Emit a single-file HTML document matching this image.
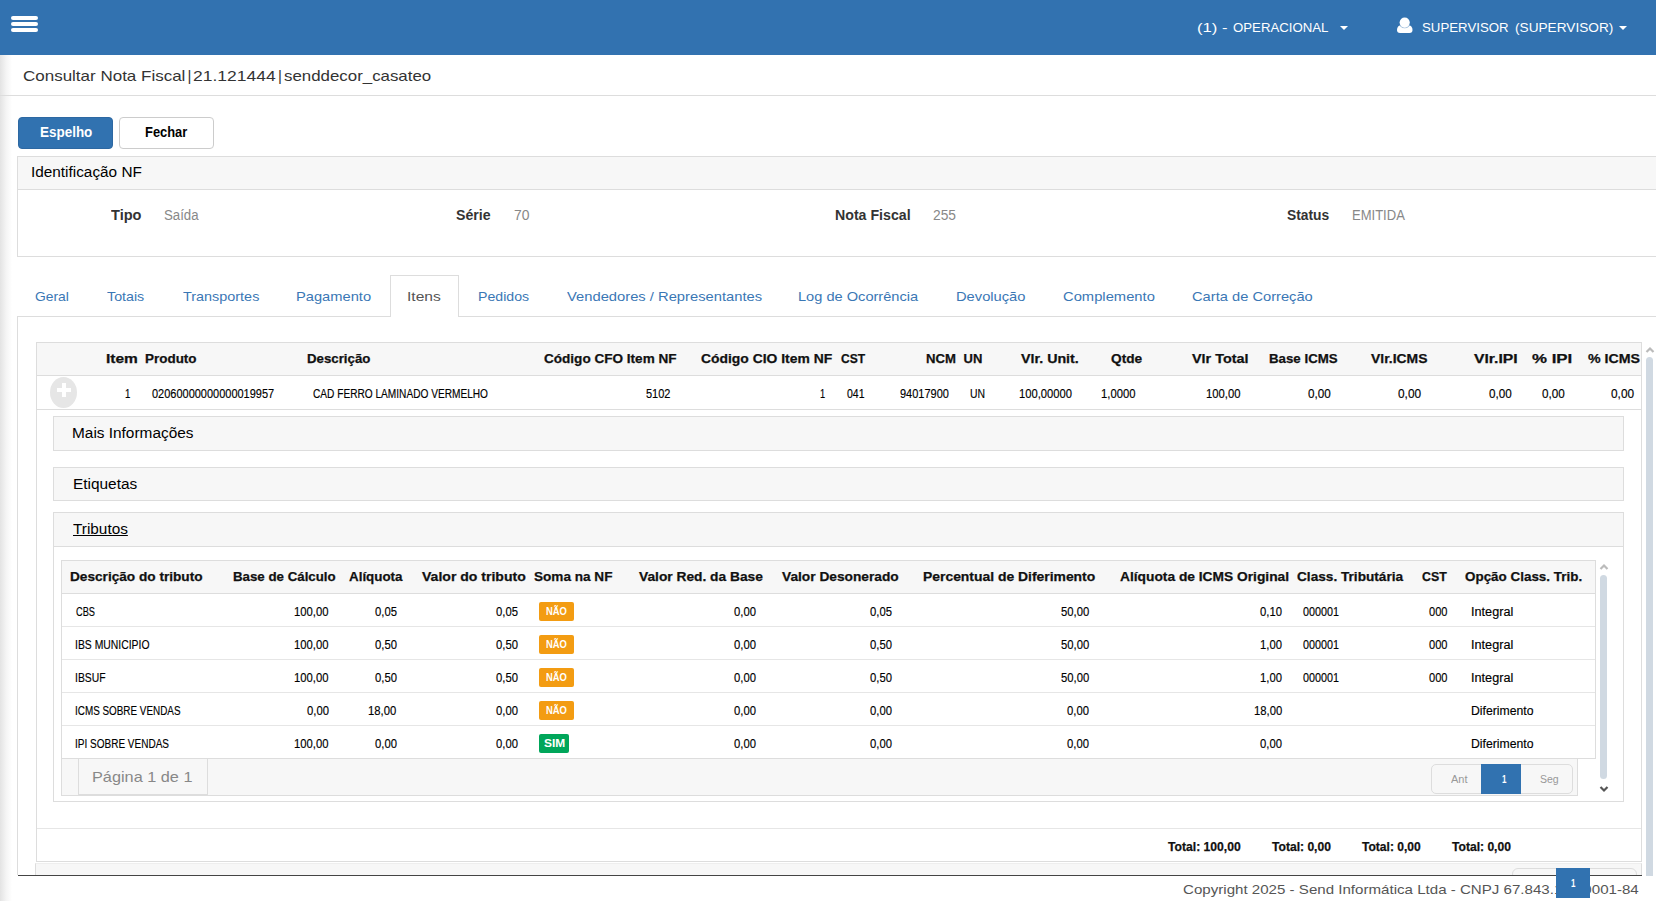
<!DOCTYPE html>
<html><head><meta charset="utf-8"><style>
html,body{margin:0;padding:0;background:#fff;width:1656px;height:901px;overflow:hidden;position:relative}
.b{position:absolute}
.hv{-webkit-text-stroke:0.25px currentColor}
.hd{-webkit-text-stroke:0.15px currentColor}
.t{position:absolute;white-space:nowrap;line-height:1;font-family:"Liberation Sans",sans-serif;transform-origin:0 0}
</style></head><body>
<div class="b" style="left:0px;top:55px;width:12px;height:846px;background:linear-gradient(to right,#e3e3e3,#f4f4f4 50%,#fff);"></div>
<div class="b" style="left:0px;top:0px;width:1656px;height:55px;background:#3272b0;"></div>
<div class="b" style="left:11px;top:16px;width:27px;height:4px;background:#fff;border-radius:2px;"></div>
<div class="b" style="left:11px;top:22px;width:27px;height:4px;background:#fff;border-radius:2px;"></div>
<div class="b" style="left:11px;top:28px;width:27px;height:4px;background:#fff;border-radius:2px;"></div>
<div class="b" style="left:1340px;top:26px;width:0;height:0;border-left:4px solid transparent;border-right:4px solid transparent;border-top:4px solid #fff;"></div>
<div class="b" style="left:1619px;top:26px;width:0;height:0;border-left:4px solid transparent;border-right:4px solid transparent;border-top:4px solid #fff;"></div>
<svg class="b" style="left:1396px;top:16px" width="18" height="18" viewBox="0 0 18 18"><path d="M1 14 Q1 9.5 5.5 9 L12 9 Q16.5 9.5 16.5 14 Q16.5 17 13.5 17 L4 17 Q1 17 1 14 Z" fill="#fff"/><circle cx="8.7" cy="6.6" r="5.7" fill="#3272b0" opacity="0.5"/><circle cx="8.7" cy="6.6" r="5.1" fill="#fff"/></svg>
<div class="b" style="left:0px;top:95px;width:1656px;height:1px;background:#ddd;"></div>
<div class="b" style="left:18px;top:117px;width:95px;height:32px;background:#3172b0;border:1px solid #2d68a2;border-radius:4px;box-sizing:border-box;"></div>
<div class="b" style="left:119px;top:117px;width:95px;height:32px;background:#fff;border:1px solid #ccc;border-radius:4px;box-sizing:border-box;"></div>
<div class="b" style="left:17px;top:156px;width:1683px;height:101px;border:1px solid #ddd;box-sizing:border-box;background:#fff;"></div>
<div class="b" style="left:18px;top:157px;width:1682px;height:33px;background:#f7f7f7;border-bottom:1px solid #ddd;box-sizing:border-box;"></div>
<div class="b" style="left:17px;top:316px;width:1639px;height:1px;background:#ddd;"></div>
<div class="b" style="left:17px;top:316px;width:1px;height:559px;background:#ddd;"></div>
<div class="b" style="left:390px;top:275px;width:69px;height:42px;background:#fff;border:1px solid #ddd;border-bottom:none;box-sizing:border-box;"></div>
<div class="b" style="left:36px;top:342px;width:1606px;height:520px;border:1px solid #ddd;box-sizing:border-box;"></div>
<div class="b" style="left:37px;top:343px;width:1604px;height:33px;background:#f7f7f7;border-bottom:1px solid #ddd;box-sizing:border-box;"></div>
<div class="b" style="left:37px;top:409px;width:1604px;height:1px;background:#ddd;"></div>
<div class="b" style="left:37px;top:828px;width:1604px;height:1px;background:#e6e6e6;"></div>
<div class="b" style="left:50px;top:377px;width:27px;height:31px;background:#e6e6e6;border-radius:50%;"></div>
<div class="b" style="left:62px;top:383px;width:4px;height:14px;background:#fff;"></div>
<div class="b" style="left:57px;top:388px;width:14px;height:4px;background:#fff;"></div>
<div class="b" style="left:53px;top:416px;width:1571px;height:35px;background:#f7f7f7;border:1px solid #ddd;box-sizing:border-box;"></div>
<div class="b" style="left:53px;top:467px;width:1571px;height:34px;background:#f7f7f7;border:1px solid #ddd;box-sizing:border-box;"></div>
<div class="b" style="left:53px;top:512px;width:1571px;height:290px;background:#fff;border:1px solid #ddd;box-sizing:border-box;"></div>
<div class="b" style="left:54px;top:513px;width:1569px;height:34px;background:#f7f7f7;border-bottom:1px solid #ddd;box-sizing:border-box;"></div>
<div class="b" style="left:61px;top:560px;width:1535px;height:199px;background:#fff;border:1px solid #ddd;box-sizing:border-box;"></div>
<div class="b" style="left:62px;top:561px;width:1533px;height:33px;background:#f7f7f7;border-bottom:1px solid #ddd;box-sizing:border-box;"></div>
<div class="b" style="left:62px;top:626px;width:1533px;height:1px;background:#e6e6e6;"></div>
<div class="b" style="left:62px;top:659px;width:1533px;height:1px;background:#e6e6e6;"></div>
<div class="b" style="left:62px;top:692px;width:1533px;height:1px;background:#e6e6e6;"></div>
<div class="b" style="left:62px;top:725px;width:1533px;height:1px;background:#e6e6e6;"></div>
<div class="b" style="left:61px;top:758px;width:1517px;height:38px;background:#f7f7f7;border:1px solid #ddd;box-sizing:border-box;"></div>
<div class="b" style="left:78px;top:758px;width:130px;height:37px;border:1px solid #ddd;border-top:none;box-sizing:border-box;"></div>
<div class="b" style="left:1431px;top:764px;width:142px;height:30px;border:1px solid #ddd;border-radius:5px;box-sizing:border-box;"></div>
<div class="b" style="left:1481px;top:764px;width:40px;height:30px;background:#3172b0;"></div>
<div class="b" style="left:539px;top:602px;width:35px;height:19px;background:#f39c12;border-radius:2px;"></div>
<div class="b" style="left:539px;top:635px;width:35px;height:19px;background:#f39c12;border-radius:2px;"></div>
<div class="b" style="left:539px;top:668px;width:35px;height:19px;background:#f39c12;border-radius:2px;"></div>
<div class="b" style="left:539px;top:701px;width:35px;height:19px;background:#f39c12;border-radius:2px;"></div>
<div class="b" style="left:539px;top:734px;width:30px;height:19px;background:#00a65a;border-radius:2px;"></div>
<svg class="b" style="left:1598.5px;top:563px" width="10" height="7" viewBox="0 0 10 7"><path d="M1.5 6 L5 2.5 L8.5 6" stroke="#bbb" stroke-width="2.2" fill="none"/></svg>
<div class="b" style="left:1600px;top:575px;width:7px;height:204px;background:#d0d9e2;border-radius:4px;"></div>
<svg class="b" style="left:1598.5px;top:785.5px" width="10" height="7" viewBox="0 0 10 7"><path d="M1.5 1 L5 4.5 L8.5 1" stroke="#555" stroke-width="2.2" fill="none"/></svg>
<div class="b" style="left:35px;top:863px;width:1607px;height:13px;background:#f7f7f7;border-left:1px solid #ddd;border-right:1px solid #ddd;border-top:1px solid #eee;box-sizing:border-box;"></div>
<div class="b" style="left:1512px;top:868px;width:125px;height:12px;border:1px solid #ddd;border-radius:6px;box-sizing:border-box;background:#f7f7f7;"></div>
<svg class="b" style="left:1644.5px;top:345.5px" width="10" height="7" viewBox="0 0 10 7"><path d="M1.5 6 L5 2.5 L8.5 6" stroke="#bbb" stroke-width="2.2" fill="none"/></svg>
<div class="b" style="left:1646px;top:357px;width:7px;height:523px;background:#d0d9e2;border-radius:4px;"></div>
<div class="b" style="left:12px;top:876px;width:1644px;height:25px;background:#fff;"></div>
<div class="b" style="left:18px;top:875px;width:1624px;height:1px;background:#444;"></div>
<div class="t " style="left:1197.00px;top:21.00px;font-size:13.5px;font-weight:400;color:#fff;transform:scaleX(1.2371);">(1) -</div>
<div class="t " style="left:1232.90px;top:21.00px;font-size:13.5px;font-weight:400;color:#fff;transform:scaleX(0.9784);">OPERACIONAL</div>
<div class="t " style="left:1421.70px;top:21.00px;font-size:13.5px;font-weight:400;color:#fff;transform:scaleX(0.9816);">SUPERVISOR</div>
<div class="t " style="left:1514.60px;top:21.00px;font-size:13.5px;font-weight:400;color:#fff;transform:scaleX(1.0106);">(SUPERVISOR)</div>
<div class="t " style="left:22.80px;top:68.00px;font-size:15px;font-weight:400;color:#333;transform:scaleX(1.1324);">Consultar Nota Fiscal</div>
<div class="t " style="left:187.50px;top:68.00px;font-size:15px;font-weight:400;color:#333;">|</div>
<div class="t " style="left:193.20px;top:68.00px;font-size:15px;font-weight:400;color:#333;transform:scaleX(1.1649);">21.121444</div>
<div class="t " style="left:278.00px;top:68.00px;font-size:15px;font-weight:400;color:#333;">|</div>
<div class="t " style="left:284.40px;top:68.00px;font-size:15px;font-weight:400;color:#333;transform:scaleX(1.1242);">senddecor_casateo</div>
<div class="t " style="left:39.50px;top:125.00px;font-size:14px;font-weight:700;color:#fff;transform:scaleX(0.9610);">Espelho</div>
<div class="t " style="left:145.20px;top:125.00px;font-size:14px;font-weight:700;color:#000;transform:scaleX(0.9212);">Fechar</div>
<div class="t " style="left:30.61px;top:164.00px;font-size:15.5px;font-weight:400;color:#000;transform:scaleX(0.9898);">Identificação NF</div>
<div class="t " style="left:111.40px;top:208.00px;font-size:14px;font-weight:700;color:#333;transform:scaleX(1.0404);">Tipo</div>
<div class="t " style="left:164.40px;top:208.00px;font-size:14px;font-weight:400;color:#888;transform:scaleX(0.9457);">Saída</div>
<div class="t " style="left:456.00px;top:208.00px;font-size:14px;font-weight:700;color:#333;transform:scaleX(1.0098);">Série</div>
<div class="t " style="left:513.60px;top:208.00px;font-size:14px;font-weight:400;color:#888;transform:scaleX(0.9945);">70</div>
<div class="t " style="left:835.20px;top:208.00px;font-size:14px;font-weight:700;color:#333;transform:scaleX(1.0122);">Nota Fiscal</div>
<div class="t " style="left:933.40px;top:208.00px;font-size:14px;font-weight:400;color:#888;transform:scaleX(0.9842);">255</div>
<div class="t " style="left:1287.40px;top:208.00px;font-size:14px;font-weight:700;color:#333;transform:scaleX(0.9860);">Status</div>
<div class="t " style="left:1351.67px;top:208.00px;font-size:14px;font-weight:400;color:#888;transform:scaleX(0.9302);">EMITIDA</div>
<div class="t " style="left:35.00px;top:290.00px;font-size:13.5px;font-weight:400;color:#3a77b5;transform:scaleX(1.0269);">Geral</div>
<div class="t " style="left:107.00px;top:290.00px;font-size:13.5px;font-weight:400;color:#3a77b5;transform:scaleX(1.0559);">Totais</div>
<div class="t " style="left:182.50px;top:290.00px;font-size:13.5px;font-weight:400;color:#3a77b5;transform:scaleX(1.0672);">Transportes</div>
<div class="t " style="left:295.51px;top:290.00px;font-size:13.5px;font-weight:400;color:#3a77b5;transform:scaleX(1.0867);">Pagamento</div>
<div class="t " style="left:477.95px;top:290.00px;font-size:13.5px;font-weight:400;color:#3a77b5;transform:scaleX(1.0471);">Pedidos</div>
<div class="t " style="left:566.80px;top:290.00px;font-size:13.5px;font-weight:400;color:#3a77b5;transform:scaleX(1.0924);">Vendedores / Representantes</div>
<div class="t " style="left:798.22px;top:290.00px;font-size:13.5px;font-weight:400;color:#3a77b5;transform:scaleX(1.0818);">Log de Ocorrência</div>
<div class="t " style="left:955.91px;top:290.00px;font-size:13.5px;font-weight:400;color:#3a77b5;transform:scaleX(1.0886);">Devolução</div>
<div class="t " style="left:1063.00px;top:290.00px;font-size:13.5px;font-weight:400;color:#3a77b5;transform:scaleX(1.0930);">Complemento</div>
<div class="t " style="left:1191.90px;top:290.00px;font-size:13.5px;font-weight:400;color:#3a77b5;transform:scaleX(1.0874);">Carta de Correção</div>
<div class="t " style="left:407.04px;top:290.00px;font-size:13.5px;font-weight:400;color:#555;transform:scaleX(1.1572);">Itens</div>
<div class="t hv" style="left:105.50px;top:352.00px;font-size:13px;font-weight:700;color:#111;transform:scaleX(1.1922);">Item</div>
<div class="t hv" style="left:145.20px;top:352.00px;font-size:13px;font-weight:700;color:#111;transform:scaleX(1.0344);">Produto</div>
<div class="t hv" style="left:306.60px;top:352.00px;font-size:13px;font-weight:700;color:#111;transform:scaleX(1.0191);">Descrição</div>
<div class="t hv" style="left:544.10px;top:352.00px;font-size:13px;font-weight:700;color:#111;transform:scaleX(1.0428);">Código CFO Item NF</div>
<div class="t hv" style="left:701.20px;top:352.00px;font-size:13px;font-weight:700;color:#111;transform:scaleX(1.0682);">Código CIO Item NF</div>
<div class="t hv" style="left:840.60px;top:352.00px;font-size:13px;font-weight:700;color:#111;transform:scaleX(0.9287);">CST</div>
<div class="t hv" style="left:926.20px;top:352.00px;font-size:13px;font-weight:700;color:#111;transform:scaleX(1.0112);">NCM</div>
<div class="t hv" style="left:963.60px;top:352.00px;font-size:13px;font-weight:700;color:#111;">UN</div>
<div class="t hv" style="left:1021.20px;top:352.00px;font-size:13px;font-weight:700;color:#111;transform:scaleX(1.0956);">Vlr. Unit.</div>
<div class="t hv" style="left:1110.90px;top:352.00px;font-size:13px;font-weight:700;color:#111;transform:scaleX(1.0517);">Qtde</div>
<div class="t hv" style="left:1191.80px;top:352.00px;font-size:13px;font-weight:700;color:#111;transform:scaleX(1.1065);">Vlr Total</div>
<div class="t hv" style="left:1268.50px;top:352.00px;font-size:13px;font-weight:700;color:#111;transform:scaleX(1.0219);">Base ICMS</div>
<div class="t hv" style="left:1370.70px;top:352.00px;font-size:13px;font-weight:700;color:#111;transform:scaleX(1.0704);">Vlr.ICMS</div>
<div class="t hv" style="left:1474.20px;top:352.00px;font-size:13px;font-weight:700;color:#111;transform:scaleX(1.2078);">Vlr.IPI</div>
<div class="t hv" style="left:1532.00px;top:352.00px;font-size:13px;font-weight:700;color:#111;transform:scaleX(1.2971);">% IPI</div>
<div class="t hv" style="left:1587.80px;top:352.00px;font-size:13px;font-weight:700;color:#111;transform:scaleX(1.0917);">% ICMS</div>
<div class="t  hd" style="left:124.80px;top:388.00px;font-size:12.5px;font-weight:400;color:#000;transform:scaleX(0.7714);">1</div>
<div class="t  hd" style="left:152.00px;top:388.00px;font-size:12.5px;font-weight:400;color:#000;transform:scaleX(0.8786);">02060000000000019957</div>
<div class="t  hd" style="left:312.80px;top:388.00px;font-size:12.5px;font-weight:400;color:#000;transform:scaleX(0.8101);">CAD FERRO LAMINADO VERMELHO</div>
<div class="t  hd" style="left:645.50px;top:388.00px;font-size:12.5px;font-weight:400;color:#000;transform:scaleX(0.8795);">5102</div>
<div class="t  hd" style="left:820.20px;top:388.00px;font-size:12.5px;font-weight:400;color:#000;transform:scaleX(0.7429);">1</div>
<div class="t  hd" style="left:846.60px;top:388.00px;font-size:12.5px;font-weight:400;color:#000;transform:scaleX(0.8420);">041</div>
<div class="t  hd" style="left:899.60px;top:388.00px;font-size:12.5px;font-weight:400;color:#000;transform:scaleX(0.8785);">94017900</div>
<div class="t  hd" style="left:969.80px;top:388.00px;font-size:12.5px;font-weight:400;color:#000;transform:scaleX(0.8321);">UN</div>
<div class="t  hd" style="left:1019.30px;top:388.00px;font-size:12.5px;font-weight:400;color:#000;transform:scaleX(0.8962);">100,00000</div>
<div class="t  hd" style="left:1100.80px;top:388.00px;font-size:12.5px;font-weight:400;color:#000;transform:scaleX(0.9012);">1,0000</div>
<div class="t  hd" style="left:1206.30px;top:388.00px;font-size:12.5px;font-weight:400;color:#000;transform:scaleX(0.9012);">100,00</div>
<div class="t  hd" style="left:1308.20px;top:388.00px;font-size:12.5px;font-weight:400;color:#000;transform:scaleX(0.9353);">0,00</div>
<div class="t  hd" style="left:1398.10px;top:388.00px;font-size:12.5px;font-weight:400;color:#000;transform:scaleX(0.9476);">0,00</div>
<div class="t  hd" style="left:1488.60px;top:388.00px;font-size:12.5px;font-weight:400;color:#000;transform:scaleX(0.9353);">0,00</div>
<div class="t  hd" style="left:1542.40px;top:388.00px;font-size:12.5px;font-weight:400;color:#000;transform:scaleX(0.9353);">0,00</div>
<div class="t  hd" style="left:1610.90px;top:388.00px;font-size:12.5px;font-weight:400;color:#000;transform:scaleX(0.9476);">0,00</div>
<div class="t " style="left:72.31px;top:425.00px;font-size:15.5px;font-weight:400;color:#000;transform:scaleX(0.9928);">Mais Informações</div>
<div class="t " style="left:72.51px;top:476.00px;font-size:15.5px;font-weight:400;color:#000;transform:scaleX(0.9941);">Etiquetas</div>
<div class="t " style="left:72.80px;top:521.00px;font-size:15.5px;font-weight:400;color:#000;transform:scaleX(0.9898);text-decoration:underline;">Tributos</div>
<div class="t hv" style="left:69.50px;top:570.00px;font-size:13px;font-weight:700;color:#111;transform:scaleX(1.0485);">Descrição do tributo</div>
<div class="t hv" style="left:233.10px;top:570.00px;font-size:13px;font-weight:700;color:#111;transform:scaleX(1.0220);">Base de Cálculo</div>
<div class="t hv" style="left:348.90px;top:570.00px;font-size:13px;font-weight:700;color:#111;transform:scaleX(1.0291);">Alíquota</div>
<div class="t hv" style="left:421.70px;top:570.00px;font-size:13px;font-weight:700;color:#111;transform:scaleX(1.0800);">Valor do tributo</div>
<div class="t hv" style="left:533.90px;top:570.00px;font-size:13px;font-weight:700;color:#111;transform:scaleX(1.0441);">Soma na NF</div>
<div class="t hv" style="left:639.10px;top:570.00px;font-size:13px;font-weight:700;color:#111;transform:scaleX(1.0580);">Valor Red. da Base</div>
<div class="t hv" style="left:781.70px;top:570.00px;font-size:13px;font-weight:700;color:#111;transform:scaleX(1.0561);">Valor Desonerado</div>
<div class="t hv" style="left:923.00px;top:570.00px;font-size:13px;font-weight:700;color:#111;transform:scaleX(1.0691);">Percentual de Diferimento</div>
<div class="t hv" style="left:1119.70px;top:570.00px;font-size:13px;font-weight:700;color:#111;transform:scaleX(1.0591);">Alíquota de ICMS Original</div>
<div class="t hv" style="left:1296.60px;top:570.00px;font-size:13px;font-weight:700;color:#111;transform:scaleX(1.0489);">Class. Tributária</div>
<div class="t hv" style="left:1421.90px;top:570.00px;font-size:13px;font-weight:700;color:#111;transform:scaleX(0.9517);">CST</div>
<div class="t hv" style="left:1465.40px;top:570.00px;font-size:13px;font-weight:700;color:#111;transform:scaleX(1.0327);">Opção Class. Trib.</div>
<div class="t  hd" style="left:75.80px;top:606.00px;font-size:12px;font-weight:400;color:#000;transform:scaleX(0.7702);">CBS</div>
<div class="t  hd" style="left:294.20px;top:606.00px;font-size:12px;font-weight:400;color:#000;transform:scaleX(0.9398);">100,00</div>
<div class="t  hd" style="left:374.74px;top:606.00px;font-size:12px;font-weight:400;color:#000;transform:scaleX(0.9398);">0,05</div>
<div class="t  hd" style="left:496.44px;top:606.00px;font-size:12px;font-weight:400;color:#000;transform:scaleX(0.9398);">0,05</div>
<div class="t  hd" style="left:733.74px;top:606.00px;font-size:12px;font-weight:400;color:#000;transform:scaleX(0.9398);">0,00</div>
<div class="t  hd" style="left:870.04px;top:606.00px;font-size:12px;font-weight:400;color:#000;transform:scaleX(0.9398);">0,05</div>
<div class="t  hd" style="left:1060.77px;top:606.00px;font-size:12px;font-weight:400;color:#000;transform:scaleX(0.9398);">50,00</div>
<div class="t  hd" style="left:1259.84px;top:606.00px;font-size:12px;font-weight:400;color:#000;transform:scaleX(0.9398);">0,10</div>
<div class="t  hd" style="left:1303.20px;top:606.00px;font-size:12px;font-weight:400;color:#000;transform:scaleX(0.8992);">000001</div>
<div class="t  hd" style="left:1428.50px;top:606.00px;font-size:12px;font-weight:400;color:#000;transform:scaleX(0.9239);">000</div>
<div class="t  hd" style="left:1470.64px;top:606.00px;font-size:12px;font-weight:400;color:#000;transform:scaleX(1.0558);">Integral</div>
<div class="t " style="left:545.90px;top:606.00px;font-size:11px;font-weight:700;color:#fff;transform:scaleX(0.8558);z-index:3;">NÃO</div>
<div class="t  hd" style="left:74.93px;top:639.00px;font-size:12px;font-weight:400;color:#000;transform:scaleX(0.8657);">IBS MUNICIPIO</div>
<div class="t  hd" style="left:294.20px;top:639.00px;font-size:12px;font-weight:400;color:#000;transform:scaleX(0.9398);">100,00</div>
<div class="t  hd" style="left:374.74px;top:639.00px;font-size:12px;font-weight:400;color:#000;transform:scaleX(0.9398);">0,50</div>
<div class="t  hd" style="left:496.44px;top:639.00px;font-size:12px;font-weight:400;color:#000;transform:scaleX(0.9398);">0,50</div>
<div class="t  hd" style="left:733.74px;top:639.00px;font-size:12px;font-weight:400;color:#000;transform:scaleX(0.9398);">0,00</div>
<div class="t  hd" style="left:870.04px;top:639.00px;font-size:12px;font-weight:400;color:#000;transform:scaleX(0.9398);">0,50</div>
<div class="t  hd" style="left:1060.77px;top:639.00px;font-size:12px;font-weight:400;color:#000;transform:scaleX(0.9398);">50,00</div>
<div class="t  hd" style="left:1259.84px;top:639.00px;font-size:12px;font-weight:400;color:#000;transform:scaleX(0.9398);">1,00</div>
<div class="t  hd" style="left:1303.20px;top:639.00px;font-size:12px;font-weight:400;color:#000;transform:scaleX(0.8992);">000001</div>
<div class="t  hd" style="left:1428.50px;top:639.00px;font-size:12px;font-weight:400;color:#000;transform:scaleX(0.9239);">000</div>
<div class="t  hd" style="left:1470.64px;top:639.00px;font-size:12px;font-weight:400;color:#000;transform:scaleX(1.0558);">Integral</div>
<div class="t " style="left:545.90px;top:639.00px;font-size:11px;font-weight:700;color:#fff;transform:scaleX(0.8558);z-index:3;">NÃO</div>
<div class="t  hd" style="left:74.94px;top:672.00px;font-size:12px;font-weight:400;color:#000;transform:scaleX(0.8645);">IBSUF</div>
<div class="t  hd" style="left:294.20px;top:672.00px;font-size:12px;font-weight:400;color:#000;transform:scaleX(0.9398);">100,00</div>
<div class="t  hd" style="left:374.74px;top:672.00px;font-size:12px;font-weight:400;color:#000;transform:scaleX(0.9398);">0,50</div>
<div class="t  hd" style="left:496.44px;top:672.00px;font-size:12px;font-weight:400;color:#000;transform:scaleX(0.9398);">0,50</div>
<div class="t  hd" style="left:733.74px;top:672.00px;font-size:12px;font-weight:400;color:#000;transform:scaleX(0.9398);">0,00</div>
<div class="t  hd" style="left:870.04px;top:672.00px;font-size:12px;font-weight:400;color:#000;transform:scaleX(0.9398);">0,50</div>
<div class="t  hd" style="left:1060.77px;top:672.00px;font-size:12px;font-weight:400;color:#000;transform:scaleX(0.9398);">50,00</div>
<div class="t  hd" style="left:1259.84px;top:672.00px;font-size:12px;font-weight:400;color:#000;transform:scaleX(0.9398);">1,00</div>
<div class="t  hd" style="left:1303.20px;top:672.00px;font-size:12px;font-weight:400;color:#000;transform:scaleX(0.8992);">000001</div>
<div class="t  hd" style="left:1428.50px;top:672.00px;font-size:12px;font-weight:400;color:#000;transform:scaleX(0.9239);">000</div>
<div class="t  hd" style="left:1470.64px;top:672.00px;font-size:12px;font-weight:400;color:#000;transform:scaleX(1.0558);">Integral</div>
<div class="t " style="left:545.90px;top:672.00px;font-size:11px;font-weight:700;color:#fff;transform:scaleX(0.8558);z-index:3;">NÃO</div>
<div class="t  hd" style="left:74.98px;top:705.00px;font-size:12px;font-weight:400;color:#000;transform:scaleX(0.8243);">ICMS SOBRE VENDAS</div>
<div class="t  hd" style="left:306.74px;top:705.00px;font-size:12px;font-weight:400;color:#000;transform:scaleX(0.9398);">0,00</div>
<div class="t  hd" style="left:368.47px;top:705.00px;font-size:12px;font-weight:400;color:#000;transform:scaleX(0.9398);">18,00</div>
<div class="t  hd" style="left:496.44px;top:705.00px;font-size:12px;font-weight:400;color:#000;transform:scaleX(0.9398);">0,00</div>
<div class="t  hd" style="left:733.74px;top:705.00px;font-size:12px;font-weight:400;color:#000;transform:scaleX(0.9398);">0,00</div>
<div class="t  hd" style="left:870.04px;top:705.00px;font-size:12px;font-weight:400;color:#000;transform:scaleX(0.9398);">0,00</div>
<div class="t  hd" style="left:1067.04px;top:705.00px;font-size:12px;font-weight:400;color:#000;transform:scaleX(0.9398);">0,00</div>
<div class="t  hd" style="left:1253.57px;top:705.00px;font-size:12px;font-weight:400;color:#000;transform:scaleX(0.9398);">18,00</div>
<div class="t  hd" style="left:1471.30px;top:705.00px;font-size:12px;font-weight:400;color:#000;transform:scaleX(1.0198);">Diferimento</div>
<div class="t " style="left:545.90px;top:705.00px;font-size:11px;font-weight:700;color:#fff;transform:scaleX(0.8558);z-index:3;">NÃO</div>
<div class="t  hd" style="left:74.97px;top:738.00px;font-size:12px;font-weight:400;color:#000;transform:scaleX(0.8344);">IPI SOBRE VENDAS</div>
<div class="t  hd" style="left:294.20px;top:738.00px;font-size:12px;font-weight:400;color:#000;transform:scaleX(0.9398);">100,00</div>
<div class="t  hd" style="left:374.74px;top:738.00px;font-size:12px;font-weight:400;color:#000;transform:scaleX(0.9398);">0,00</div>
<div class="t  hd" style="left:496.44px;top:738.00px;font-size:12px;font-weight:400;color:#000;transform:scaleX(0.9398);">0,00</div>
<div class="t  hd" style="left:733.74px;top:738.00px;font-size:12px;font-weight:400;color:#000;transform:scaleX(0.9398);">0,00</div>
<div class="t  hd" style="left:870.04px;top:738.00px;font-size:12px;font-weight:400;color:#000;transform:scaleX(0.9398);">0,00</div>
<div class="t  hd" style="left:1067.04px;top:738.00px;font-size:12px;font-weight:400;color:#000;transform:scaleX(0.9398);">0,00</div>
<div class="t  hd" style="left:1259.84px;top:738.00px;font-size:12px;font-weight:400;color:#000;transform:scaleX(0.9398);">0,00</div>
<div class="t  hd" style="left:1471.30px;top:738.00px;font-size:12px;font-weight:400;color:#000;transform:scaleX(1.0198);">Diferimento</div>
<div class="t " style="left:543.50px;top:738.00px;font-size:11px;font-weight:700;color:#fff;transform:scaleX(1.0829);z-index:3;">SIM</div>
<div class="t " style="left:92.41px;top:769.00px;font-size:15px;font-weight:400;color:#888;transform:scaleX(1.0851);">Página 1 de 1</div>
<div class="t " style="left:1451.20px;top:775.00px;font-size:10px;font-weight:400;color:#999;transform:scaleX(1.1030);">Ant</div>
<div class="t " style="left:1501.80px;top:775.00px;font-size:10px;font-weight:700;color:#fff;transform:scaleX(0.8000);">1</div>
<div class="t " style="left:1540.20px;top:775.00px;font-size:10px;font-weight:400;color:#999;transform:scaleX(1.0504);">Seg</div>
<div class="t hv" style="left:1168.10px;top:840.00px;font-size:13px;font-weight:700;color:#111;transform:scaleX(0.9348);">Total: 100,00</div>
<div class="t hv" style="left:1272.00px;top:840.00px;font-size:13px;font-weight:700;color:#111;transform:scaleX(0.9303);">Total: 0,00</div>
<div class="t hv" style="left:1362.00px;top:840.00px;font-size:13px;font-weight:700;color:#111;transform:scaleX(0.9271);">Total: 0,00</div>
<div class="t hv" style="left:1452.40px;top:840.00px;font-size:13px;font-weight:700;color:#111;transform:scaleX(0.9303);">Total: 0,00</div>
<div class="t " style="left:1183.30px;top:883.00px;font-size:13.5px;font-weight:400;color:#555;transform:scaleX(1.1184);">Copyright 2025 - Send Informática Ltda - CNPJ 67.843.127/0001-84</div>
<div class="t " style="left:1571.20px;top:879.00px;font-size:10px;font-weight:700;color:#fff;transform:scaleX(0.8000);z-index:6;">1</div>
<div class="b" style="left:1556px;top:868px;width:34px;height:30px;background:#3172b0;z-index:5"></div>
</body></html>
